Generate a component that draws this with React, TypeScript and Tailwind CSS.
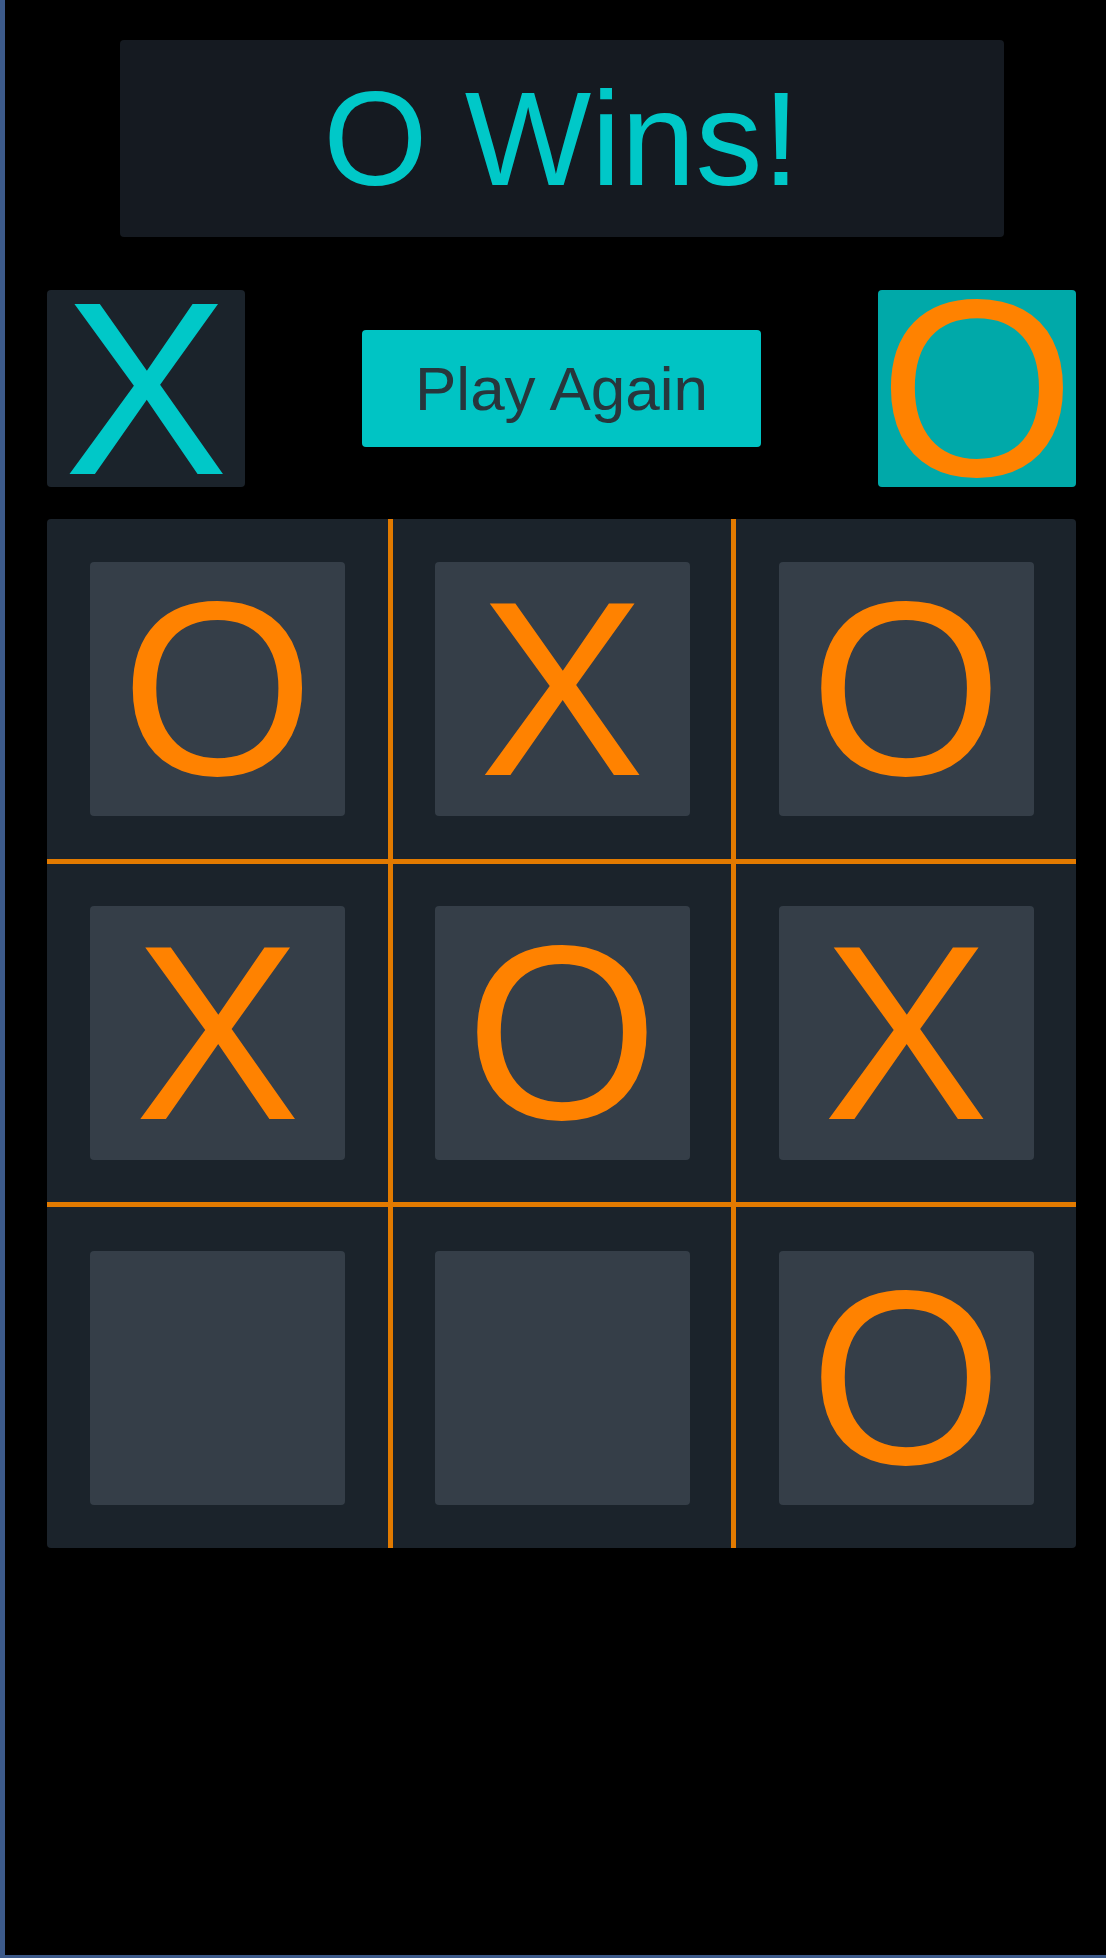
// Tic-tac-toe end screen: winner banner, player badges, replay button, board.

const BOARD: ('X' | 'O' | '')[] = ['O', 'X', 'O', 'X', 'O', 'X', '', '', 'O'];

const font = { fontFamily: '"Liberation Sans", Arial, sans-serif' };

export default function App() {
  return (
    <div
      className="w-[1106px] h-[1958px] bg-black border-l-[5px] border-b-[3px] border-[#3c5a8a] overflow-hidden"
      style={font}
    >
      <div className="w-[1029px] ml-[42px] pt-[40px] flex flex-col">
        {/* Winner banner */}
        <div className="mx-auto w-[884px] h-[197px] bg-[#151a21] rounded-[4px] flex items-center justify-center">
          <span className="text-[134px] leading-none text-[#00c8c8]">O Wins!</span>
        </div>

        {/* Players + replay */}
        <div className="mt-[53px] flex items-center justify-between">
          <PlayerBadge mark="X" active={false} />
          <button
            type="button"
            className="w-[399px] h-[117px] bg-[#00c4c4] rounded-[4px] flex items-center justify-center text-[62px] leading-none text-[#27363c]"
          >
            Play Again
          </button>
          <PlayerBadge mark="O" active />
        </div>

        {/* Board */}
        <div className="mt-[32px] w-[1029px] h-[1029px] bg-[#1b232b] rounded-[4px] grid grid-cols-[346px_343px_340px] grid-rows-[345px_343px_341px]">
          {BOARD.map((m, i) => {
            const col = i % 3;
            const row = Math.floor(i / 3);
            return (
              <div
                key={i}
                className={`flex items-center justify-center border-[#e27a00] ${col < 2 ? 'border-r-[5px]' : ''} ${row < 2 ? 'border-b-[5px]' : ''}`}
              >
                <div className="w-[255px] h-[254px] bg-[#353e48] rounded-[4px] flex items-center justify-center">
                  {m && <span className="text-[248px] leading-none text-[#ff8200]">{m}</span>}
                </div>
              </div>
            );
          })}
        </div>
      </div>
    </div>
  );
}

function PlayerBadge({ mark, active }: { mark: string; active: boolean }) {
  return (
    <div
      className={`w-[198px] h-[197px] rounded-[4px] flex items-center justify-center ${
        active ? 'bg-[#00a9a9] text-[#ff8200]' : 'bg-[#1b232b] text-[#00c8c8]'
      }`}
    >
      <span className={`${active ? 'text-[252px]' : 'text-[246px]'} leading-none`}>{mark}</span>
    </div>
  );
}
